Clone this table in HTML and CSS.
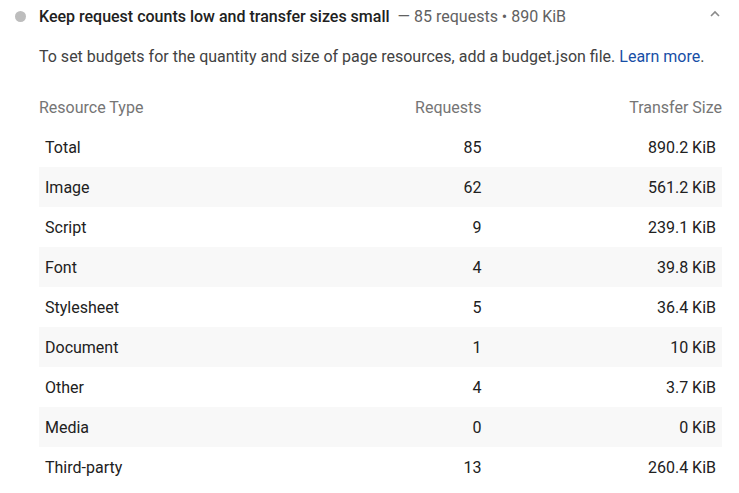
FILE: index.html
```html
<!DOCTYPE html>
<html>
<head>
<meta charset="utf-8">
<link rel="stylesheet" href="styles.css">
</head>
<body>
<div class="audit">
  <div class="summary">
    <span class="dot"></span>
    <span class="title">Keep request counts low and transfer sizes small</span>
    <span class="display">— 85 requests • 890 KiB</span>
    <span class="spacer"></span>
    <svg class="chevron" width="12" height="8" viewBox="0 0 12 8"><path d="M2 6 L6 2 L10 6" fill="none" stroke="#8a8a8a" stroke-width="1.6"/></svg>
  </div>
  <p class="desc">To set budgets for the quantity and size of page resources, add a budget.json file. <a class="link" href="#">Learn more</a>.</p>
  <table class="table">
    <thead>
      <tr><th class="c-type">Resource Type</th><th class="c-req">Requests</th><th class="c-size">Transfer Size</th></tr>
    </thead>
    <tbody>
      <tr><td class="c-type">Total</td><td class="c-req">85</td><td class="c-size">890.2 KiB</td></tr>
      <tr><td class="c-type">Image</td><td class="c-req">62</td><td class="c-size">561.2 KiB</td></tr>
      <tr><td class="c-type">Script</td><td class="c-req">9</td><td class="c-size">239.1 KiB</td></tr>
      <tr><td class="c-type">Font</td><td class="c-req">4</td><td class="c-size">39.8 KiB</td></tr>
      <tr><td class="c-type">Stylesheet</td><td class="c-req">5</td><td class="c-size">36.4 KiB</td></tr>
      <tr><td class="c-type">Document</td><td class="c-req">1</td><td class="c-size">10 KiB</td></tr>
      <tr><td class="c-type">Other</td><td class="c-req">4</td><td class="c-size">3.7 KiB</td></tr>
      <tr><td class="c-type">Media</td><td class="c-req">0</td><td class="c-size">0 KiB</td></tr>
      <tr><td class="c-type">Third-party</td><td class="c-req">13</td><td class="c-size">260.4 KiB</td></tr>
    </tbody>
  </table>
</div>
</body>
</html>
```
FILE: styles.css
```css
html, body {
  margin: 0;
  padding: 0;
  background: #ffffff;
}
body {
  font-family: Roboto, "Liberation Sans", sans-serif;
  font-size: 16px;
  color: #212121;
}
.audit {
  padding: 0 17px 0 15px;
}
.summary {
  display: flex;
  align-items: center;
  height: 32px;
}
.dot {
  width: 11px;
  height: 11px;
  border-radius: 50%;
  background: #bdbdbd;
  margin-right: 13px;
  flex: none;
}
.title {
  font-weight: 500;
  color: #212121;
}
.display {
  margin-left: 8px;
  color: #616161;
}
.spacer {
  flex: 1;
}
.chevron {
  margin-right: 1px;
  margin-top: -4px;
}
.desc {
  margin: 13px 0 0 24px;
  line-height: 24px;
  color: #424242;
}
.link {
  color: #174ea6;
  text-decoration: none;
}
.table {
  margin: 18px 0 0 24px;
  width: calc(100% - 24px);
  border-collapse: collapse;
}
.table th {
  font-weight: normal;
  color: #757575;
  height: 40px;
  padding: 0;
  box-sizing: border-box;
  text-align: left;
}
.table td {
  height: 40px;
  padding: 0 6px;
}
.table th.c-req, .table td.c-req {
  text-align: right;
}
.table th.c-size, .table td.c-size {
  text-align: right;
}
.table td.c-req {
  padding-right: 0;
}
.table tbody tr:nth-child(even) {
  background: #f8f8f8;
}
```
